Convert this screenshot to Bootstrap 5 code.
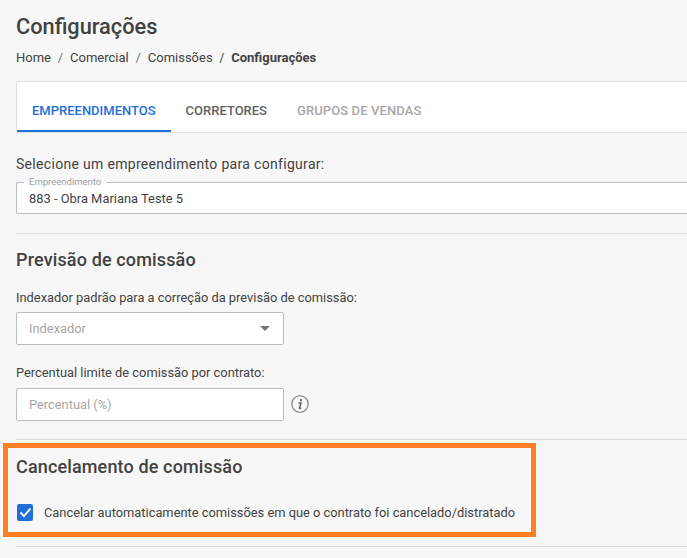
<!DOCTYPE html>
<html lang="pt-BR">
<head>
<meta charset="utf-8">
<title>Configurações</title>
<link href="https://cdn.jsdelivr.net/npm/bootstrap@5.3.0/dist/css/bootstrap.min.css" rel="stylesheet">
<style>
html,body{height:558px;overflow:hidden}
body{background:#f7f7f7;font-family:Roboto,"Liberation Sans",sans-serif;color:#424242;font-size:13px;line-height:16px;position:relative}
.shell{padding:16px 0 0 16px}
.page-title{font-size:21.75px;line-height:22px;font-weight:500;margin:0 0 12px;color:#424242}
.crumbs{margin:0 0 15px;font-size:13px;line-height:16px;--bs-breadcrumb-divider-color:#757575;--bs-breadcrumb-item-padding-x:6.85px}
.crumbs .breadcrumb-item.active{color:#424242;font-weight:700}
.crumbs .breadcrumb-item{color:#424242}
.tabbar{background:#fff;border:1px solid #e0e0e0;border-right:0;height:52px;margin-bottom:22px}
.tab-link{display:block;height:50px;padding:21px 15px 0;font-size:13px;line-height:16px;font-weight:500;color:#616161;text-decoration:none}
.tab-link.on{color:#1f6fd8;border-bottom:2px solid #1f6fd8}
.tab-link.off{color:#a8a8a8;letter-spacing:.1px}
.field-lead{margin:0 0 4px;font-size:14px;line-height:18px;letter-spacing:.31px}
.outlined{margin:0;padding:0 12px;border:1px solid #bdbdbd;border-right:0;border-radius:2px 0 0 2px;background:#fff;height:37px}
.outlined legend{float:none;width:auto;margin:0 0 0 -5px;padding:0 5px;font-size:9.5px;line-height:10px;height:10px;color:#a0a0a0}
.outlined .val{font-size:12.9px;line-height:16px;margin-top:4px}
.rule{border:0;border-top:1px solid #dcdcdc;opacity:1;margin:0}
.sec-title{font-size:18px;line-height:20px;font-weight:500;color:#424242;letter-spacing:.14px;margin:0}
.lbl{font-size:12.85px;line-height:16px;margin:0 0 6px}
.lbl-b{margin-bottom:7px}
.box{width:268px;height:33px;border:1px solid #bdbdbd;border-radius:2px;background:#fff;padding:0 12px;font-size:12.85px;color:#a6a6a6}
.caret{width:0;height:0;border-left:5px solid transparent;border-right:5px solid transparent;border-top:5px solid #757575;margin-right:1px}
.tick{width:16px;height:17px;margin-left:1px;border-radius:2px;background:#1f6fd8;flex:none}
.tick-row{gap:11px}
.info-icon{margin-top:-2px}
.callout{position:absolute;left:3px;top:443px;width:533px;height:94px;border:5px solid #ff7f27;pointer-events:none}
.s1{margin-top:19px}.s2{margin-top:16px}.s3{margin-top:20px}.s4{margin-top:20px}.s5{margin-top:18px}.s6{margin-top:17px}.s7{margin-top:27px}.s8{margin-top:25px}
.gap-7{gap:7px}
</style>
</head>
<body>
<div class="shell">
  <h1 class="page-title">Configurações</h1>
  <ol class="breadcrumb crumbs">
    <li class="breadcrumb-item">Home</li>
    <li class="breadcrumb-item">Comercial</li>
    <li class="breadcrumb-item">Comissões</li>
    <li class="breadcrumb-item active" aria-current="page">Configurações</li>
  </ol>
  <ul class="nav tabbar">
    <li class="nav-item"><a class="tab-link on" href="#">EMPREENDIMENTOS</a></li>
    <li class="nav-item"><a class="tab-link" href="#">CORRETORES</a></li>
    <li class="nav-item"><a class="tab-link off" href="#">GRUPOS DE VENDAS</a></li>
  </ul>
  <p class="field-lead">Selecione um empreendimento para configurar:</p>
  <fieldset class="outlined">
    <legend>Empreendimento</legend>
    <div class="val">883 - Obra Mariana Teste 5</div>
  </fieldset>
  <hr class="rule s1">
  <h2 class="sec-title s2">Previsão de comissão</h2>
  <p class="lbl s3">Indexador padrão para a correção da previsão de comissão:</p>
  <div class="box d-flex align-items-center justify-content-between"><span>Indexador</span><span class="caret"></span></div>
  <p class="lbl lbl-b s4">Percentual limite de comissão por contrato:</p>
  <div class="d-flex align-items-center gap-7">
    <div class="box d-flex align-items-center"><span>Percentual (%)</span></div>
    <svg class="info-icon" width="18" height="18" viewBox="0 0 18 18" aria-hidden="true"><circle cx="9" cy="9" r="8.2" fill="none" stroke="#757575" stroke-width="1.1"/><circle cx="10" cy="5.2" r="1.15" fill="#616161"/><path d="M7.4 8.1h2.6l-1.5 5.1c-.1.5.4.6 1.7-.3" fill="none" stroke="#616161" stroke-width="1.5"/></svg>
  </div>
  <hr class="rule s5">
  <h2 class="sec-title s6">Cancelamento de comissão</h2>
  <div class="d-flex align-items-center s7 tick-row">
    <span class="tick d-flex align-items-center justify-content-center"><svg width="13" height="11" viewBox="0 0 13 11" aria-hidden="true"><path d="M1.5 5.5l3.5 3.5 6.5-7.5" fill="none" stroke="#fff" stroke-width="1.9"/></svg></span>
    <span class="lbl mb-0">Cancelar automaticamente comissões em que o contrato foi cancelado/distratado</span>
  </div>
  <hr class="rule s8">
</div>
<div class="callout"></div>
</body>
</html>
